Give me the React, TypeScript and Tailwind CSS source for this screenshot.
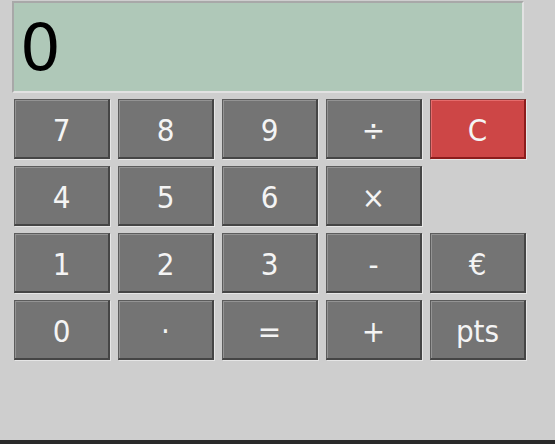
import React from "react";

const keys: string[][] = [
  ["7", "8", "9", "÷", "C"],
  ["4", "5", "6", "×", ""],
  ["1", "2", "3", "-", "€"],
  ["0", "·", "=", "+", "pts"],
];

function Key({ label }: { label: string }) {
  if (!label) return <div />;
  const red = label === "C";
  const base =
    "flex items-center justify-center h-[60px] w-[96px] border-t border-l border-b-2 border-r-2 text-[31px] leading-none text-[#f4f4f4] select-none";
  const grey =
    "bg-[#747474] border-t-[#5c5c5c] border-l-[#5c5c5c] border-b-[#454545] border-r-[#454545] shadow-[inset_1px_1px_0_#939393,1px_1px_0_#e6e6e6]";
  const redCls =
    "bg-[#cd4646] border-t-[#7c4040] border-l-[#7c4040] border-b-[#8c1c1c] border-r-[#8c1c1c] shadow-[inset_1px_1px_0_#e56b6b,1px_1px_0_#e6e6e6]";
  return (
    <div className={`${base} ${red ? redCls : grey}`}>
      <span className="pt-[3px]">{label}</span>
    </div>
  );
}

export default function App() {
  return (
    <div
      className="h-[444px] w-full bg-[#cecece] border-b-4 border-[#2a2a2a] flex flex-col pl-[12px] pt-[1px]"
      style={{ fontFamily: '"DejaVu Sans Condensed", "DejaVu Sans", sans-serif' }}
    >
      <div className="w-[512px] h-[92px] border-2 border-t-[#a8a8a8] border-l-[#a8a8a8] border-b-[#e2e2e2] border-r-[#e2e2e2] bg-[#afc8b8] flex items-center pl-[6px] pt-[1px]">
        <span
          className="text-[64px] leading-none text-black"
          style={{ fontFamily: '"DejaVu Sans", sans-serif' }}
        >
          0
        </span>
      </div>
      <div className="mt-[6px] ml-[2px] grid grid-cols-[repeat(5,96px)] grid-rows-[repeat(4,60px)] gap-x-2 gap-y-[7px]">
        {keys.flat().map((k, i) => (
          <Key key={i} label={k} />
        ))}
      </div>
    </div>
  );
}
